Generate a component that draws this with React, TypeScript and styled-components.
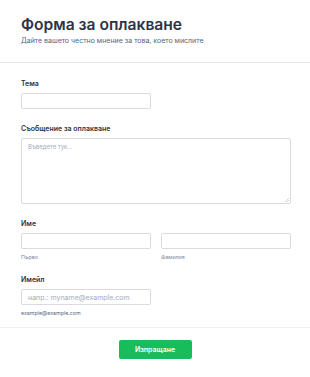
import React from 'react';
import styled, { createGlobalStyle } from 'styled-components';

const GlobalStyle = createGlobalStyle`
	body {
		margin: 0;
		background: #ffffff;
		font-family: Inter, 'Noto Sans', sans-serif;
	}
`;

const Page = styled.div`
	width: 310px;
	background: #ffffff;
`;

const Header = styled.div`
	padding: 15px 21px 16px;
	border-bottom: 1px solid #e6e8ec;
`;

const Title = styled.h1`
	margin: 0;
	font-size: 15.6px;
	line-height: 20px;
	font-weight: 600;
	color: #2c3345;
`;

const Subtitle = styled.p`
	margin: 1px 0 0;
	font-size: 7px;
	line-height: 10px;
	color: #57647e;
`;

const Body = styled.div`
	padding: 16px 19px 11px 21px;
	display: flex;
	flex-direction: column;
	gap: 15px;
	border-bottom: 1px solid #f0f1f3;
`;

const Field = styled.div`
	display: flex;
	flex-direction: column;
`;

const Label = styled.label`
	font-size: 7px;
	line-height: 10px;
	font-weight: 600;
	color: #2c3345;
	margin-bottom: 4px;
`;

const Input = styled.input<{ $half?: boolean }>`
	box-sizing: border-box;
	width: ${(p) => (p.$half ? '100%' : '130px')};
	height: 16px;
	border: 1px solid #d8dbe2;
	border-radius: 2px;
	padding: 0 6px;
	font-family: Inter, sans-serif;
	font-size: 7px;
	outline: none;
	&::placeholder {
		color: #a3abbb;
	}
`;

const AreaWrap = styled.div`
	position: relative;
`;

const TextArea = styled.textarea`
	box-sizing: border-box;
	display: block;
	width: 100%;
	height: 66px;
	border: 1px solid #d8dbe2;
	border-radius: 2px;
	padding: 4px 6px;
	font-family: Inter, sans-serif;
	font-size: 6px;
	outline: none;
	resize: none;
	&::placeholder {
		color: #a3abbb;
	}
`;

const Grip = styled.svg`
	position: absolute;
	right: 2px;
	bottom: 2px;
	width: 5px;
	height: 5px;
	pointer-events: none;
`;

const Row = styled.div`
	display: grid;
	grid-template-columns: 1fr 1fr;
	column-gap: 10px;
`;

const Col = styled.div`
	display: flex;
	flex-direction: column;
`;

const Hint = styled.span<{ $dark?: boolean }>`
	margin-top: 5px;
	font-size: 5.3px;
	line-height: 6px;
	color: ${(p) => (p.$dark ? '#57647e' : '#7c879c')};
`;

const Footer = styled.div`
	display: flex;
	justify-content: center;
	padding: 12px 0 16px;
`;

const Submit = styled.button`
	width: 73px;
	height: 19px;
	border: none;
	border-radius: 2px;
	background: #18bd5b;
	color: #ffffff;
	font-family: Inter, sans-serif;
	font-size: 7px;
	font-weight: 600;
`;

export default function App() {
	return (
		<Page>
			<GlobalStyle />
			<Header>
				<Title>Форма за оплакване</Title>
				<Subtitle>Дайте вашето честно мнение за това, което мислите</Subtitle>
			</Header>
			<Body>
				<Field>
					<Label>Тема</Label>
					<Input />
				</Field>
				<Field>
					<Label>Съобщение за оплакване</Label>
					<AreaWrap>
						<TextArea placeholder="Въведете тук..." />
						<Grip viewBox="0 0 5 5">
							<path d="M5 1L1 5M5 3L3 5" stroke="#c4c9d3" strokeWidth="0.8" />
						</Grip>
					</AreaWrap>
				</Field>
				<Field>
					<Label>Име</Label>
					<Row>
						<Col>
							<Input $half />
							<Hint>Първо</Hint>
						</Col>
						<Col>
							<Input $half />
							<Hint>Фамилия</Hint>
						</Col>
					</Row>
				</Field>
				<Field>
					<Label>Имейл</Label>
					<Input placeholder="напр.: myname@example.com" />
					<Hint $dark>example@example.com</Hint>
				</Field>
			</Body>
			<Footer>
				<Submit>Изпращане</Submit>
			</Footer>
		</Page>
	);
}
